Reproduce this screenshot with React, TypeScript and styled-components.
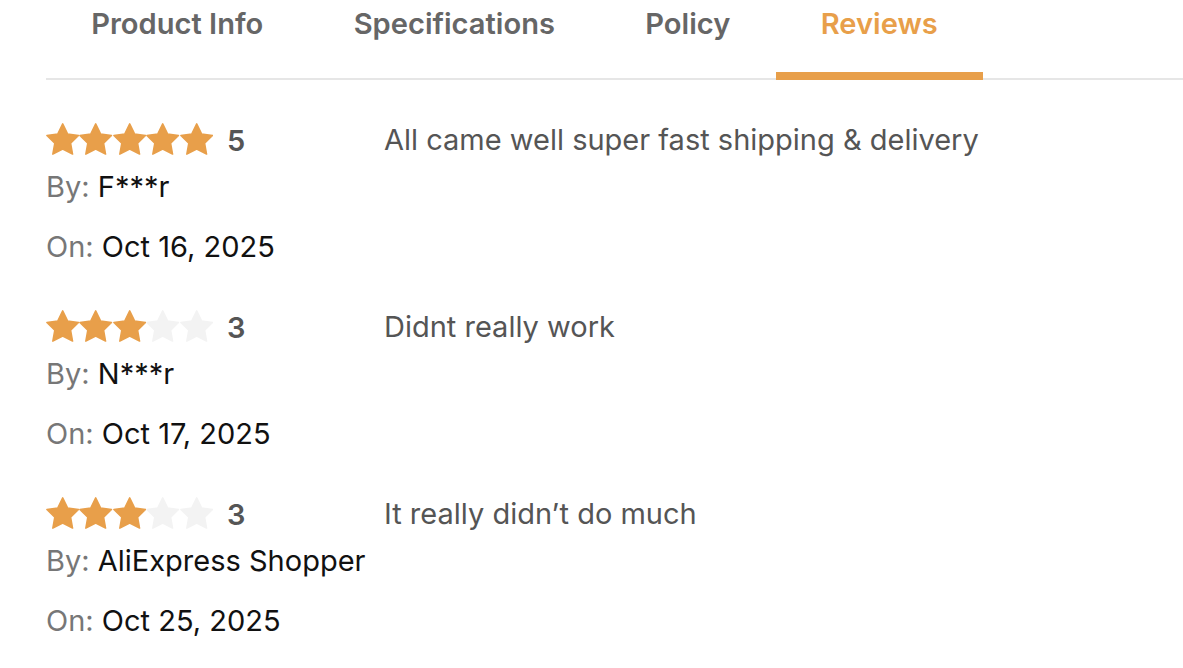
import React from "react";
import styled, { createGlobalStyle } from "styled-components";

const GlobalStyle = createGlobalStyle`
  html, body { margin: 0; padding: 0; background: #fff; }
  body { font-family: Inter, "Noto Sans", sans-serif; }
`;

const Page = styled.div`
  padding: 0 0 0 46px;
  width: 1183px;
  box-sizing: border-box;
`;

const TabBar = styled.div`
  display: flex;
  border-bottom: 2px solid #e6e6e6;
  height: 78px;
`;

const Tab = styled.div<{ $active?: boolean }>`
  position: relative;
  padding: 5px 45.2px 0;
  font-size: 29.1px;
  font-weight: 600;
  line-height: 38px;
  color: ${(p) => (p.$active ? "#e89f4a" : "#666666")};
  &::after {
    content: "";
    display: ${(p) => (p.$active ? "block" : "none")};
    position: absolute;
    left: 0;
    right: 0;
    bottom: -2px;
    height: 8px;
    background: #e89f4a;
  }
`;

const List = styled.div`
  display: flex;
  flex-direction: column;
  padding-top: 40px;
`;

const Review = styled.div`
  display: grid;
  grid-template-columns: 338px 1fr;
  height: 187px;
`;

const Meta = styled.div`
  display: flex;
  flex-direction: column;
`;

const RatingRow = styled.div`
  display: flex;
  align-items: center;
  height: 40px;
`;

const Stars = styled.div`
  display: flex;
`;

const RatingNum = styled.span`
  margin-left: 14px;
  font-size: 29px;
  font-weight: 600;
  color: #555;
`;

const Line = styled.div<{ $top: number }>`
  margin-top: ${(p) => p.$top}px;
  font-size: 29px;
  line-height: 34px;
  color: #111;
`;

const Label = styled.span`
  color: #777;
`;

const Body = styled.div`
  font-size: 29px;
  line-height: 40px;
  color: #555;
`;

const StarSvg = styled.svg`
  width: 33.4px;
  height: 33.4px;
  display: block;
`;

const Star: React.FC<{ filled: boolean }> = ({ filled }) => (
  <StarSvg viewBox="1 1 22 22">
    <path
      d="M12 1.6l3.2 6.6 7.2 1-5.2 5.1 1.3 7.2L12 18.1l-6.5 3.4 1.3-7.2L1.6 9.2l7.2-1z"
      fill={filled ? "#e89f4a" : "#f3f3f3"}
      strokeLinejoin="round"
      stroke={filled ? "#e89f4a" : "#f3f3f3"}
      strokeWidth="1"
    />
  </StarSvg>
);

const reviews = [
  { rating: 5, by: "F***r", on: "Oct 16, 2025", text: "All came well super fast shipping & delivery" },
  { rating: 3, by: "N***r", on: "Oct 17, 2025", text: "Didnt really work" },
  { rating: 3, by: "AliExpress Shopper", on: "Oct 25, 2025", text: "It really didn’t do much" },
];

export default function App() {
  return (
    <Page>
      <GlobalStyle />
      <TabBar>
        <Tab>Product Info</Tab>
        <Tab>Specifications</Tab>
        <Tab>Policy</Tab>
        <Tab $active>Reviews</Tab>
      </TabBar>
      <List>
        {reviews.map((r, i) => (
          <Review key={i}>
            <Meta>
              <RatingRow>
                <Stars>
                  {[0, 1, 2, 3, 4].map((s) => (
                    <Star key={s} filled={s < r.rating} />
                  ))}
                </Stars>
                <RatingNum>{r.rating}</RatingNum>
              </RatingRow>
              <Line $top={10}>
                <Label>By: </Label>
                {r.by}
              </Line>
              <Line $top={26}>
                <Label>On: </Label>
                {r.on}
              </Line>
            </Meta>
            <Body>{r.text}</Body>
          </Review>
        ))}
      </List>
    </Page>
  );
}
